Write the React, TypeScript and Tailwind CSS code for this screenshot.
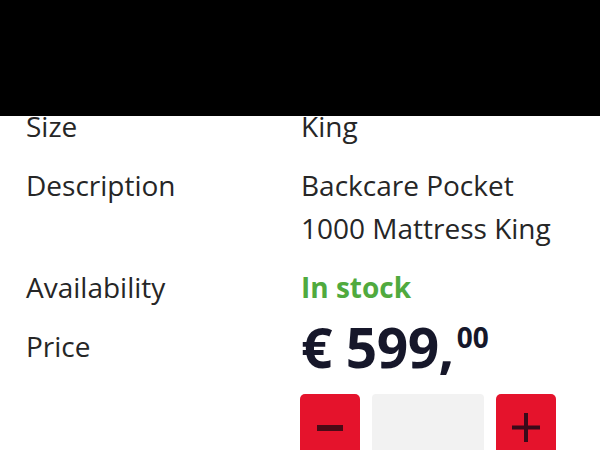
import React from "react";

export default function App() {
  const font = { fontFamily: '"Open Sans", "Noto Sans", sans-serif' };
  return (
    <div className="relative w-[600px] h-[450px] overflow-hidden bg-white" style={font}>
      <div className="pt-[105px] px-[26px]">
        <div className="grid grid-cols-[275px_1fr] gap-y-[16px] text-[28px] leading-[43px] text-[#262626]">
          <div>Size</div>
          <div>King</div>
          <div>Description</div>
          <div>
            Backcare Pocket
            <br />
            1000 Mattress King
          </div>
          <div>Availability</div>
          <div className="font-bold text-[#50aa3e]">In stock</div>
          <div>Price</div>
          <div>
            <div className="flex items-start text-[#16172a]">
              <span className="text-[55px] leading-[43px] font-bold tracking-[-0.5px]">€ 599,</span>
              <span className="text-[28px] leading-[28px] font-bold mt-[-2px] ml-[3px]">00</span>
            </div>
            <div className="flex gap-[12px] mt-[26px] ml-[-1px]">
              <div className="w-[60px] h-[60px] rounded-[5px] bg-[#e5132c] flex items-start justify-center">
                <div className="mt-[31px] w-[26px] h-[6px] bg-[#4a0a16]" />
              </div>
              <div className="w-[112px] h-[60px] rounded-[4px] bg-[#f2f2f2]" />
              <div className="w-[60px] h-[60px] rounded-[5px] bg-[#e5132c] flex items-start justify-center">
                <svg className="mt-[19px]" width="28" height="29" viewBox="0 0 28 29">
                  <rect x="0" y="12.5" width="28" height="4" fill="#3a0a1a" />
                  <rect x="12" y="0" width="4" height="29" fill="#3a0a1a" />
                </svg>
              </div>
            </div>
          </div>
        </div>
      </div>
      <div className="absolute left-0 top-0 w-[600px] h-[116px] bg-black" />
    </div>
  );
}
